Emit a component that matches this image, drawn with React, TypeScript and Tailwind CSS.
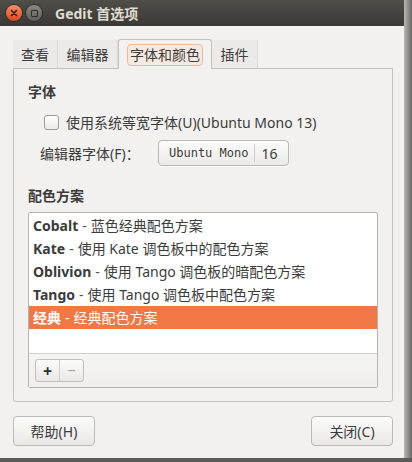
import { useState } from 'react';

const schemes = [
  { name: 'Cobalt', desc: '蓝色经典配色方案' },
  { name: 'Kate', desc: '使用 Kate 调色板中的配色方案' },
  { name: 'Oblivion', desc: '使用 Tango 调色板的暗配色方案' },
  { name: 'Tango', desc: '使用 Tango 调色板中配色方案' },
  { name: '经典', desc: '经典配色方案' },
];

const tabs = [
  { label: '查看', w: 'w-[45px]' },
  { label: '编辑器', w: 'w-[60px]' },
  { label: '字体和颜色', w: 'w-[94px]' },
  { label: '插件', w: 'w-[46px]' },
];

export default function App() {
  const [selected, setSelected] = useState(4);
  const [mono, setMono] = useState(false);

  return (
    <div className="flex h-[462px] w-[412px] flex-col bg-[#5b5b5a] font-['Noto_Sans','Noto_Sans_CJK_SC',sans-serif] text-[14px] text-[#3c3c3c]">
      <div className="flex h-[458px]">
        <div className="flex w-[404px] flex-col bg-[#f2f1f0]">
          {/* title bar */}
          <div className="flex h-[26px] items-center bg-gradient-to-b from-[#4f4e49] to-[#3a3935] pl-[6px]">
            <div className="flex h-[16px] w-[16px] items-center justify-center rounded-full bg-gradient-to-b from-[#f68f66] to-[#d8461a] shadow-[0_0_0_1px_#2e2d2a]">
              <svg width="8" height="8" viewBox="0 0 8 8">
                <path d="M1.5 1.5 L6.5 6.5 M6.5 1.5 L1.5 6.5" stroke="#3b1a0c" strokeWidth="1.6" strokeLinecap="round" />
              </svg>
            </div>
            <div className="ml-[4px] flex h-[16px] w-[16px] items-center justify-center rounded-full bg-gradient-to-b from-[#8a8984] to-[#5f5e5a] shadow-[0_0_0_1px_#2e2d2a]">
              <div className="h-[7px] w-[7px] rounded-[1px] border border-[#2f2e2b]" />
            </div>
            <span className="ml-[13px] text-[14px] font-bold text-[#dfdbd2]">Gedit 首选项</span>
          </div>

          <div className="flex flex-1 flex-col pl-[13px] pr-[11px] pt-[14px]">
            {/* tabs */}
            <div className="flex h-[28px] items-end">
              {tabs.map((t, i) =>
                i === 2 ? (
                  <div
                    key={t.label}
                    className={`${t.w} relative z-10 -mb-px flex h-[30px] items-center justify-center rounded-t-[3px] border border-b-0 border-[#c4c2bd] bg-[#f2f1f0]`}
                  >
                    <span className="rounded-[4px] border border-[#eab9a2] bg-[#f6e9e2] px-[2px] leading-[20px]">{t.label}</span>
                  </div>
                ) : (
                  <div
                    key={t.label}
                    className={`${t.w} flex h-[28px] items-center justify-center border-r border-[#dcdad6] bg-[#eceae8]`}
                  >
                    {t.label}
                  </div>
                ),
              )}
            </div>

            {/* notebook page */}
            <div className="flex flex-col rounded-b-[3px] border border-[#c4c2bd] bg-[#f2f1f0] px-[14px] pb-[13px] pt-[14px]">
              <div className="text-[14px] font-bold leading-[18px]">字体</div>
              <label className="mt-[11px] flex h-[20px] items-center pl-[16px]">
                <button
                  onClick={() => setMono(!mono)}
                  className="flex h-[15px] w-[15px] items-center justify-center rounded-[3px] border border-[#9e9c98] bg-gradient-to-b from-[#ffffff] to-[#ebeae8]"
                >
                  {mono && (
                    <svg width="10" height="10" viewBox="0 0 10 10">
                      <path d="M2 5 L4 7.5 L8 2.5" stroke="#3c3c3c" strokeWidth="1.6" fill="none" />
                    </svg>
                  )}
                </button>
                <span className="ml-[7px]">使用系统等宽字体(U)(Ubuntu Mono 13)</span>
              </label>
              <div className="mt-[8px] flex h-[26px] items-center pl-[12px]">
                <span className="w-[118px]">编辑器字体(F)：</span>
                <button className="flex h-[26px] items-center rounded-[4px] border border-[#bab8b4] bg-gradient-to-b from-[#fcfcfc] to-[#ebeae8] shadow-[0_1px_0_#ffffff]">
                  <span className="pl-[10px] pr-[6px] font-['DejaVu_Sans_Mono',monospace] text-[12px]">Ubuntu Mono</span>
                  <span className="h-[18px] w-px bg-[#cfcdc9]" />
                  <span className="pl-[6px] pr-[10px]">16</span>
                </button>
              </div>

              <div className="mt-[21px] text-[14px] font-bold leading-[18px]">配色方案</div>
              <div className="mt-[7px] flex flex-col rounded-[2px] border border-[#b6b4b0] bg-white">
                <div className="flex h-[140px] flex-col pt-[1px]">
                  {schemes.map((s, i) => (
                    <div
                      key={s.name}
                      onClick={() => setSelected(i)}
                      className={`flex h-[23px] items-center px-[4px] ${i === selected ? 'bg-[#f07746] text-white' : ''}`}
                    >
                      <span className="font-bold">{s.name}</span>
                      <span className={`mx-[4px] ${i === selected ? 'text-white' : 'text-[#555]'}`}>-</span>
                      <span>{s.desc}</span>
                    </div>
                  ))}
                </div>
                <div className="flex h-[34px] items-center border-t border-[#d2d0cc] bg-gradient-to-b from-[#f4f4f3] to-[#f0efee] pl-[6px]">
                  <div className="flex h-[23px] overflow-hidden rounded-[3px] border border-[#c2c0bc] bg-gradient-to-b from-[#fbfbfb] to-[#e9e8e6]">
                    <span className="flex w-[23px] items-center justify-center text-[16px] font-bold leading-none text-[#2e2e2e]">+</span>
                    <span className="w-px bg-[#d0cecb]" />
                    <span className="flex w-[23px] items-center justify-center text-[15px] leading-none text-[#a5a3a0]">−</span>
                  </div>
                </div>
              </div>
            </div>

            {/* dialog buttons */}
            <div className="mt-[14px] flex justify-between">
              <button className="h-[30px] w-[82px] rounded-[4px] border border-[#bcbab6] bg-gradient-to-b from-[#fbfbfb] to-[#e9e8e6]">
                帮助(H)
              </button>
              <button className="h-[30px] w-[82px] rounded-[4px] border border-[#bcbab6] bg-gradient-to-b from-[#fbfbfb] to-[#e9e8e6]">
                关闭(C)
              </button>
            </div>
          </div>
        </div>
        <div className="w-[8px] bg-gradient-to-r from-[#b9b8b6] to-[#6a6a69]" />
      </div>
    </div>
  );
}
